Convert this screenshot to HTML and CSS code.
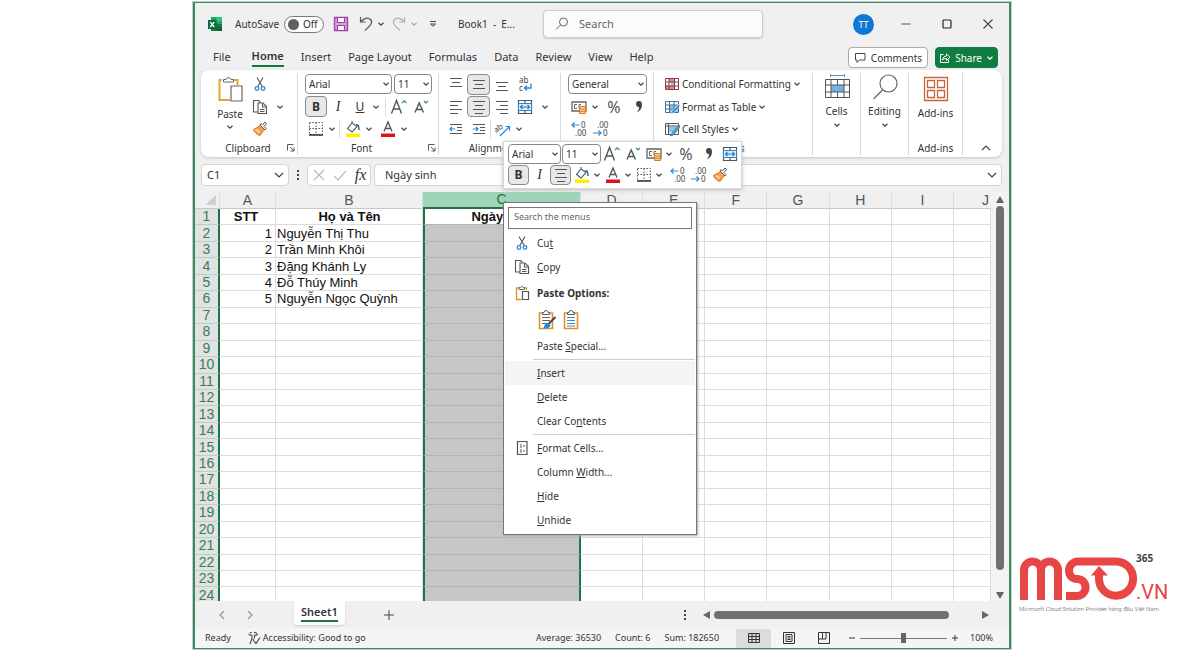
FILE: index.html
```html
<!DOCTYPE html>
<html lang="vi">
<head>
<meta charset="utf-8">
<title>Book1 - Excel</title>
<link rel="stylesheet" href="styles.css">
</head>
<body>
<svg class="sprite" aria-hidden="true">
  <symbol id="chev" viewBox="0 0 8 8"><path d="M1.5 2.8 4 5.2l2.5-2.4" fill="none" stroke="#444" stroke-width="1.2"/></symbol>
  <symbol id="cut" viewBox="0 0 14 16"><g fill="none" stroke="#555" stroke-width="1.1"><path d="M4 1.5 9.500 11M10 1.5 4.500 11"/><g stroke="#2b88d8" stroke-width="1.300"><circle cx="4" cy="12.500" r="1.800"/><circle cx="10" cy="12.500" r="1.800"/></g></g></symbol>
  <symbol id="copy" viewBox="0 0 16 16"><g fill="#fff" stroke="#555" stroke-width="1.1"><path d="M6 13H1.500V1.500h5L8.500 3.500"/><path d="M6 4h5l3.500 3.500v7H6z"/><path d="M10.500 4.500v3.500h4M8 10.500h4.500M8 12.500h4.500" fill="none"/></g></symbol>
  <symbol id="paste" viewBox="0 0 28 30"><path d="M6 5H3.500v20H14M18 5h3.500v5" fill="none" stroke="#eba133" stroke-width="2"/><path d="M7.500 7V4.500h2.500a2.600 2.600 0 0 1 5 0h2.500V7z" fill="#fff" stroke="#666"/><path d="M15 11h11v15H15z" fill="#fff" stroke="#666" stroke-width="1.200"/></symbol>
  <symbol id="pastesm" viewBox="0 0 16 16"><path d="M4.500 3H2.500v11.500h5M10.500 3h2v2" fill="none" stroke="#e0922a" stroke-width="1.300"/><path d="M5 4.500v-2h1.500a1.300 1.300 0 0 1 2.500 0h1.500v2z" fill="#fff" stroke="#666"/><path d="M8.500 6.500h6v8h-6z" fill="#fff" stroke="#555" stroke-width="1.200"/></symbol>
  <symbol id="painter" viewBox="0 0 16 16"><path d="M8.500 4.500 1.500 8.500c1 3 3 4.800 6.500 6l4.500-6z" fill="#f6a14a" stroke="#d9741a"/><path d="m3.500 9 3 .5M6 12l1.500-2" stroke="#fff" fill="none"/><path d="m8 4 5 5 1-1.500-2-2 2.500-3-1.500-1.500L10.500 4 9 2.500z" fill="#fff" stroke="#555"/></symbol>
  <symbol id="grow" viewBox="0 0 18 18"><path d="m1.500 15.500 5-13 5 13M3.400 11h6.200" fill="none" stroke="#555" stroke-width="1.400"/><path d="m12 5 2.200-2.200L16.500 5" fill="none" stroke="#2b88a8" stroke-width="1.200"/></symbol>
  <symbol id="shrink" viewBox="0 0 18 18"><path d="M3 14.500 7.200 5l4.300 9.500M4.500 11.500h5.500" fill="none" stroke="#555" stroke-width="1.400"/><path d="m12 3 2 2 2-2" fill="none" stroke="#2b88a8" stroke-width="1.200"/></symbol>
  <symbol id="borders" viewBox="0 0 16 16"><path d="M1.500 1.500h13v12h-13zM8 1.500v12M1.500 7.500h13" fill="none" stroke="#555" stroke-dasharray="1.500 1.500"/><path d="M1 14h14" stroke="#333" stroke-width="1.500"/></symbol>
  <symbol id="fill" viewBox="0 0 16 18"><path d="M7 3 2.500 8.500 7 12l5-5.500zM7 3V1" fill="#fff" stroke="#555" stroke-width="1.100"/><path d="M11 5c2-1 3 1 3 5" fill="none" stroke="#2b6ea8" stroke-width="1.500"/><path d="M1 13.500h14v3.500H1z" fill="#fbf000"/></symbol>
  <symbol id="fcolor" viewBox="0 0 16 18"><path d="M4 11.500 8 2l4 9.500M5.300 8.500h5.400" fill="none" stroke="#555" stroke-width="1.300"/><path d="M1 13.500h14v3.500H1z" fill="#e0101a"/></symbol>
  <symbol id="atop" viewBox="0 0 16 16"><path d="M2 2.500h12M4 6.500h8M2 10.500h12" stroke="#555" stroke-width="1.100"/></symbol>
  <symbol id="amid" viewBox="0 0 16 16"><path d="M2 4.500h12M4 8.500h8M2 12.500h12" stroke="#555" stroke-width="1.100"/></symbol>
  <symbol id="abot" viewBox="0 0 16 16"><path d="M2 6.500h12M4 10.500h8M2 14.500h12" stroke="#555" stroke-width="1.100"/></symbol>
  <symbol id="left" viewBox="0 0 16 16"><path d="M2 2.500h12M2 6.500h8M2 10.500h12M2 14.500h8" stroke="#555" stroke-width="1.100"/></symbol>
  <symbol id="center" viewBox="0 0 16 16"><path d="M2 2.500h12M4 6.500h8M2 10.500h12M4 14.500h8" stroke="#555" stroke-width="1.100"/></symbol>
  <symbol id="right" viewBox="0 0 16 16"><path d="M2 2.500h12M6 6.500h8M2 10.500h12M6 14.500h8" stroke="#555" stroke-width="1.100"/></symbol>
  <symbol id="outdent" viewBox="0 0 16 16"><path d="M2 3.500h12M9 6.500h5M9 9.500h5M2 12.500h12" stroke="#555" stroke-width="1.100"/><path d="M7 8H2M4 6 2 8l2 2" fill="none" stroke="#2b88d8" stroke-width="1.200"/></symbol>
  <symbol id="indent" viewBox="0 0 16 16"><path d="M2 3.500h12M9 6.500h5M9 9.500h5M2 12.500h12" stroke="#555" stroke-width="1.100"/><path d="M2 8h5M5 6l2 2-2 2" fill="none" stroke="#2b88d8" stroke-width="1.200"/></symbol>
  <symbol id="merge" viewBox="0 0 16 16"><path d="M1.500 1.500h13v13h-13zM8 1.500v13" fill="#fff" stroke="#555" stroke-width="1.200"/><path d="M1.500 4.500h13v7h-13z" fill="#d8edfb" stroke="#2b88c8"/><path d="M3.500 8h9M5.500 6l-2 2 2 2M10.500 6l2 2-2 2" fill="none" stroke="#2b78b8" stroke-width="1.100"/></symbol>
  <symbol id="money" viewBox="0 0 16 16"><path d="M1 3h14v9H1z" fill="#fff" stroke="#666" stroke-width="1.300"/><path d="M6 5.500H3.500v4H6M8 9.500v-4h2" fill="none" stroke="#666"/><path d="M8.500 7.500h6v7h-6zM8.500 10h6M8.500 12.300h6" fill="#fbd09c" stroke="#dc7c1e"/></symbol>
  <symbol id="comma" viewBox="0 0 10 14"><path d="M2 4a2.900 2.900 0 0 1 5.900 0C8.400 7.500 6.500 11 2.800 12.500 4.500 10.500 5 8.800 5 7 3.500 7.200 2 6 2 4z" fill="#444"/></symbol>
  <symbol id="cond" viewBox="0 0 16 16"><path d="M1.500 2.500h13v11h-13z" fill="#fff"/><path d="M5 2.500h5v4H5zM2 9.500h8v4H2z" fill="#f08080"/><path d="M7 6h4v4H7z" fill="#8fc4ef"/><path d="M1.500 2.500h13v11h-13zM5 2.500v11M10.500 2.500v11M1.500 6h13M1.500 10h13" fill="none" stroke="#7c4646"/></symbol>
  <symbol id="ftable" viewBox="0 0 16 16"><path d="M1.500 2.500h13v11h-13z" fill="#fff"/><path d="M5 6h9v7H5z" fill="#8fc4ef"/><path d="M1.500 2.500h13v11h-13zM5.500 2.500v11M10 2.500v11M1.500 6h13M1.500 10h13" fill="none" stroke="#47708c"/><path d="m15 5-7 7-2 3 3.500-1L16 7z" fill="#2b88d8" stroke="#fff" stroke-width=".6"/></symbol>
  <symbol id="cstyle" viewBox="0 0 16 16"><path d="M1.500 2.500h13v11h-13z" fill="#fff" stroke="#555"/><path d="M4.500 5.500h8v6h-8z" fill="#8fc4ef"/><path d="M1.500 5h13M4.500 2.500v11" stroke="#555"/><path d="m15 4-7 8-2 3 3.500-1L16 6z" fill="#58a6dc" stroke="#444" stroke-width=".6"/></symbol>
  <symbol id="cells" viewBox="0 0 28 28"><path d="M7.500 2.500h14M7.500 1v3M21.500 1v3" stroke="#4d9cc9"/><path d="M2.500 6.500h24v18h-24z" fill="#fff"/><path d="M8 12h13v7H8z" fill="#6db4ee"/><path d="M2.500 6.500h24v18h-24zM8 6.500v18M21 6.500v18M14.500 6.500v5.500M14.500 19v5.500M2.500 12h24M2.500 19h24" fill="none" stroke="#555"/></symbol>
  <symbol id="find" viewBox="0 0 28 28"><circle cx="17.500" cy="10.500" r="8.500" fill="#fff" stroke="#666" stroke-width="1.200"/><path d="m11.500 17-9 9" stroke="#666" stroke-width="1.200"/></symbol>
  <symbol id="addins" viewBox="0 0 28 28"><path d="M2.500 2.500h23v23h-23zM5.500 5.500h7v7h-7zM15.500 5.500h7v7h-7zM5.500 15.500h7v7h-7zM15.500 15.500h7v7h-7z" fill="none" stroke="#c4673a" stroke-width="1.300"/></symbol>
  <symbol id="launch" viewBox="0 0 8 8"><path d="M.5 6.500v-6h6M3 3l4 4M7 3.500V7H3.500" fill="none" stroke="#555"/></symbol>
  <symbol id="pasteword" viewBox="0 0 20 22"><path d="M5 4H2.500v15.500h13V4H13" fill="none" stroke="#e0922a" stroke-width="1.600"/><path d="M5.500 5.500V3.500H7a2 2 0 0 1 4 0h1.500v2z" fill="#fff" stroke="#555"/><path d="M5 8.500h8M5 11.500h8M5 14.500h5" stroke="#666"/><path d="m18.500 8-8 8" stroke="#444" stroke-width="2"/><path d="M11.500 14.500c-3-1-4 1-5 5 4 .5 7-1 7-3.500z" fill="#2b88d8"/></symbol>
  <symbol id="pastetext" viewBox="0 0 20 22"><path d="M5 4H2.500v15.500h13V4H13" fill="none" stroke="#e0922a" stroke-width="1.600"/><path d="M5.500 5.500V3.500H7a2 2 0 0 1 4 0h1.500v2z" fill="#fff" stroke="#555"/><path d="M5 8.500h8M5 11.500h8M5 14.500h8M5 17h8" stroke="#3a8dc8"/></symbol>
</svg>

<main class="page">
<section class="window">
  <header class="titlebar">
    <svg class="xl" viewBox="0 0 16 16"><path d="M4 1h11v14H4z" fill="#21a366"/><path d="M9.500 1H15v4.500H9.500z" fill="#33c481"/><path d="M4 8h11v7H4z" fill="#107c41"/><path d="M9.500 11H15v4H9.500z" fill="#185c37"/><path d="M1 4h8.500v9H1z" fill="#0e6b37"/><path d="m3.300 6 4 5M7.300 6l-4 5" stroke="#fff" stroke-width="1.300"/></svg>
    <label class="autosave">AutoSave <span class="toggle"><input type="checkbox"><span class="knob"></span>Off</span></label>
    <button class="tb" aria-label="Save"><svg viewBox="0 0 16 16"><path d="M1.500 1.500h13v13h-13z" fill="#d8a0df" stroke="#a144ad" stroke-width="1.400"/><path d="M4.500 1.500h7v5h-7zM4.500 9.500h7v5h-7z" fill="#fff" stroke="#a144ad" stroke-width="1.200"/></svg></button>
    <button class="tb undo" aria-label="Undo"><svg viewBox="0 0 16 16"><path d="M2.500 1v5h5M2.500 6C6 2 10 1 12.500 3.500s1 5-5.500 11" fill="none" stroke="#555" stroke-width="1.200"/></svg></button>
    <button class="chv" aria-label="Undo list"><svg><use href="#chev"/></svg></button>
    <button class="tb faded" aria-label="Redo"><svg viewBox="0 0 16 16"><path d="M13.500 1v5h-5M13.500 6C10 2 6 1 3.500 3.500s-1 5 5.500 11" fill="none" stroke="#555" stroke-width="1.200"/></svg></button>
    <button class="chv faded" aria-label="Redo list"><svg><use href="#chev"/></svg></button>
    <button class="chv qat" aria-label="Customize toolbar"><svg viewBox="0 0 8 8"><path d="M1 1.500h6M1.500 4 4 6.300 6.500 4z" fill="none" stroke="#444"/></svg></button>
    <span class="doc">Book1&nbsp; -&nbsp; E...</span>
    <label class="search"><svg viewBox="0 0 16 16"><circle cx="9.500" cy="6" r="4" fill="none" stroke="#666"/><path d="M6.500 9 2 13.500" stroke="#666"/></svg><input type="search" placeholder="Search" aria-label="Search"></label>
    <span class="avatar">TT</span>
    <div class="winbtns">
      <button aria-label="Minimize"><svg viewBox="0 0 12 12"><path d="M1.500 6h9" stroke="#555"/></svg></button>
      <button aria-label="Maximize"><svg viewBox="0 0 12 12"><rect x="2" y="2" width="8" height="8" rx="1" fill="none" stroke="#222" stroke-width="1.200"/></svg></button>
      <button aria-label="Close"><svg viewBox="0 0 12 12"><path d="m1.500 1.500 9 9M10.500 1.500l-9 9" stroke="#444" stroke-width="1.100"/></svg></button>
    </div>
  </header>

  <nav class="tabs">
    <button>File</button><button class="on">Home</button><button>Insert</button><button>Page Layout</button><button>Formulas</button><button>Data</button><button>Review</button><button>View</button><button>Help</button>
    <button class="comments"><svg viewBox="0 0 12 12"><path d="M1.500 1.500h9.500v6.500H5.500L3 10.500V8H1.500z" fill="none" stroke="#444"/></svg>Comments</button>
    <button class="share"><svg viewBox="0 0 12 12"><path d="M4.500 2.500h-3v8h8v-3M3.500 8c.5-3 2-4 4-4V2l3.500 3.200L7.500 8.400V6.500c-2 0-3 .3-4 1.500z" fill="none" stroke="#fff"/></svg>Share<svg class="mini-chev" viewBox="0 0 8 8"><path d="M1.500 2.800 4 5.200l2.500-2.400" fill="none" stroke="#fff" stroke-width="1.200"/></svg></button>
  </nav>

  <section class="ribbon">
    <div class="group clipboard">
      <div class="clip">
        <button class="big"><svg><use href="#paste"/></svg>Paste<svg class="mini-chev"><use href="#chev"/></svg></button>
        <div class="stack">
          <div class="row"><button class="t" aria-label="Cut"><svg><use href="#cut"/></svg></button></div>
          <div class="row"><button class="t" aria-label="Copy"><svg><use href="#copy"/></svg></button><button class="chv wide" aria-label="Copy options"><svg><use href="#chev"/></svg></button></div>
          <div class="row"><button class="t" aria-label="Format Painter"><svg><use href="#painter"/></svg></button></div>
        </div>
      </div>
      <div class="cap"><span>Clipboard</span><button aria-label="Clipboard settings"><svg><use href="#launch"/></svg></button></div>
    </div>
    <div class="group font">
      <div class="stack">
        <div class="row gap2"><span class="pick name"><select aria-label="Font"><option>Arial</option></select><svg><use href="#chev"/></svg></span><span class="pick size"><select aria-label="Font size"><option>11</option></select><svg><use href="#chev"/></svg></span></div>
        <div class="row"><button class="t on"><b>B</b></button><button class="t it">I</button><button class="t"><u>U</u></button><button class="chv" aria-label="Underline options"><svg><use href="#chev"/></svg></button><i class="bar loose"></i><button class="t" aria-label="Grow font"><svg class="lg"><use href="#grow"/></svg></button><button class="t" aria-label="Shrink font"><svg class="lg"><use href="#shrink"/></svg></button></div>
        <div class="row"><button class="t" aria-label="Borders"><svg><use href="#borders"/></svg></button><button class="chv" aria-label="Border options"><svg><use href="#chev"/></svg></button><i class="bar"></i><button class="t" aria-label="Fill color"><svg class="lg"><use href="#fill"/></svg></button><button class="chv" aria-label="Fill options"><svg><use href="#chev"/></svg></button><button class="t apart" aria-label="Font color"><svg class="lg"><use href="#fcolor"/></svg></button><button class="chv" aria-label="Font color options"><svg><use href="#chev"/></svg></button></div>
      </div>
      <div class="cap"><span>Font</span><button aria-label="Font settings"><svg><use href="#launch"/></svg></button></div>
    </div>
    <div class="group align">
      <div class="stack">
        <div class="row"><button class="t" aria-label="Top align"><svg><use href="#atop"/></svg></button><button class="t on" aria-label="Middle align"><svg><use href="#amid"/></svg></button><button class="t" aria-label="Bottom align"><svg><use href="#abot"/></svg></button><button class="t" aria-label="Wrap text"><svg class="lg" viewBox="0 0 18 18"><path d="M15 8.500v4.500H8.500M11 10.500 8.500 13l2.500 2.500" fill="none" stroke="#2b88d8" stroke-width="1.300"/><text x="3" y="8" class="tiny">ab</text><text x="3" y="16" class="tiny">c</text></svg></button></div>
        <div class="row"><button class="t" aria-label="Align left"><svg><use href="#left"/></svg></button><button class="t on" aria-label="Center"><svg><use href="#center"/></svg></button><button class="t" aria-label="Align right"><svg><use href="#right"/></svg></button><button class="t" aria-label="Merge"><svg><use href="#merge"/></svg></button><button class="chv wide" aria-label="Merge options"><svg><use href="#chev"/></svg></button></div>
        <div class="row"><button class="t" aria-label="Decrease indent"><svg><use href="#outdent"/></svg></button><button class="t" aria-label="Increase indent"><svg><use href="#indent"/></svg></button><i class="bar tight"></i><button class="t" aria-label="Orientation"><svg class="lg" viewBox="0 0 18 18"><path d="m6 16 9-9M11.500 6.500h4v4" fill="none" stroke="#2b88d8" stroke-width="1.200"/><text x="1" y="12" class="tiny" transform="rotate(-35 3 11)">ab</text></svg></button><button class="chv" aria-label="Orientation options"><svg><use href="#chev"/></svg></button></div>
      </div>
      <div class="cap"><span>Alignment</span></div>
    </div>
    <div class="group number">
      <div class="stack">
        <div class="row"><span class="pick format"><select aria-label="Number format"><option>General</option></select><svg><use href="#chev"/></svg></span></div>
        <div class="row"><button class="t" aria-label="Accounting"><svg><use href="#money"/></svg></button><button class="chv" aria-label="Accounting options"><svg><use href="#chev"/></svg></button><button class="t pct">%</button><button class="t" aria-label="Comma style"><svg class="comma"><use href="#comma"/></svg></button></div>
        <div class="row"><button class="t" aria-label="Increase decimal"><svg class="lg" viewBox="0 0 18 18"><path d="M9.500 5H2M4.500 2.500 2 5l2.500 2.500" fill="none" stroke="#2b88d8" stroke-width="1.200"/><text x="11" y="8" class="tiny">0</text><text x="5" y="16" class="tiny">.00</text></svg></button><button class="t" aria-label="Decrease decimal"><svg class="lg" viewBox="0 0 18 18"><path d="M1 13h8M6.500 10.500 9 13l-2.500 2.500" fill="none" stroke="#2b88d8" stroke-width="1.200"/><text x="5" y="8" class="tiny">.00</text><text x="11" y="16" class="tiny">0</text></svg></button></div>
      </div>
      <div class="cap"><span>Number</span></div>
    </div>
    <div class="group styles">
      <div class="stack">
        <button class="line"><svg><use href="#cond"/></svg>Conditional Formatting<svg class="mini-chev"><use href="#chev"/></svg></button>
        <button class="line"><svg><use href="#ftable"/></svg>Format as Table<svg class="mini-chev"><use href="#chev"/></svg></button>
        <button class="line"><svg><use href="#cstyle"/></svg>Cell Styles<svg class="mini-chev"><use href="#chev"/></svg></button>
      </div>
      <div class="cap"><span>Styles</span></div>
    </div>
    <div class="group narrow"><button class="big"><svg><use href="#cells"/></svg>Cells<svg class="mini-chev"><use href="#chev"/></svg></button></div>
    <div class="group narrow"><button class="big"><svg><use href="#find"/></svg>Editing<svg class="mini-chev"><use href="#chev"/></svg></button></div>
    <div class="group addins"><button class="big"><svg><use href="#addins"/></svg>Add-ins</button><div class="cap"><span>Add-ins</span></div></div>
    <button class="collapse" aria-label="Collapse ribbon"><svg viewBox="0 0 12 12"><path d="m2 8 4-4 4 4" fill="none" stroke="#444" stroke-width="1.200"/></svg></button>
  </section>

  <section class="formula">
    <label class="field namebox"><input value="C1" aria-label="Name box"><svg viewBox="0 0 12 12"><path d="m2 4 4 4 4-4" fill="none" stroke="#444" stroke-width="1.200"/></svg></label>
    <span class="dots"><i></i><i></i><i></i></span>
    <div class="field fx">
      <button aria-label="Cancel"><svg viewBox="0 0 14 14"><path d="m2 2 10 10M12 2 2 12" stroke="#bbb" stroke-width="1.200"/></svg></button>
      <button aria-label="Enter"><svg viewBox="0 0 14 14"><path d="m1 8 4 4 8-9" fill="none" stroke="#bbb" stroke-width="1.200"/></svg></button>
      <button class="fn">fx</button>
    </div>
    <label class="field entry"><input value="Ngày sinh" aria-label="Formula"><svg viewBox="0 0 12 12"><path d="m2 4 4 4 4-4" fill="none" stroke="#444" stroke-width="1.200"/></svg></label>
  </section>

  <section class="sheet">
    <table>
      <colgroup><col class="cn"><col class="ca"><col class="cb"><col class="cc"><col><col><col><col><col><col><col class="cj"></colgroup>
      <thead><tr><th class="corner"></th><th>A</th><th>B</th><th class="picked">C</th><th>D</th><th>E</th><th>F</th><th>G</th><th>H</th><th>I</th><th class="last">J</th></tr></thead>
      <tbody id="rows"></tbody>
    </table>
    <div class="vscroll"><i class="up"></i><i class="thumb"></i><i class="down"></i></div>
  </section>

  <section class="sheetbar">
    <button class="nav" aria-label="Previous sheet"><svg viewBox="0 0 12 12"><path d="M8 2 4 6l4 4" fill="none" stroke="#999" stroke-width="1.200"/></svg></button>
    <button class="nav" aria-label="Next sheet"><svg viewBox="0 0 12 12"><path d="m4 2 4 4-4 4" fill="none" stroke="#999" stroke-width="1.200"/></svg></button>
    <button class="sheettab"><span>Sheet1</span></button>
    <button class="plus" aria-label="New sheet"><svg viewBox="0 0 12 12"><path d="M6 1v10M1 6h10" stroke="#444"/></svg></button>
    <span class="dots"><i></i><i></i><i></i></span>
    <div class="hscroll"><i class="lt"></i><i class="thumb"></i><i class="rt"></i></div>
  </section>

  <footer class="status">
    <span>Ready</span>
    <svg class="acc" viewBox="0 0 14 14"><path d="M1.500 3.500 5 4.500v3L3 13M11 3.500 7.500 4.500v3M3 2.500c0-1 1-1.500 1.500-.5M7 2c1-1.500 3-.5 2 1M6 8l1 2 2 2.500 4-6" fill="none" stroke="#444" stroke-width="1.100"/></svg>
    <span>Accessibility: Good to go</span>
    <span class="avg">Average: 36530</span><span class="count">Count: 6</span><span class="sum">Sum: 182650</span>
    <div class="views">
      <button class="on" aria-label="Normal"><svg viewBox="0 0 12 12"><path d="M.5 1.500h11v9H.5zM4 1.500v9M8 1.500v9M.5 4.500h11M.5 7.500h11" fill="none" stroke="#333"/></svg></button>
      <button aria-label="Page layout"><svg viewBox="0 0 12 12"><path d="M.5.5h11v11H.5zM3 2.500h6v7H3zM4.500 4.500h3M4.500 6h3M4.500 7.500h3" fill="none" stroke="#333"/></svg></button>
      <button aria-label="Page break"><svg viewBox="0 0 12 12"><path d="M.5.5h11v11H.5zM4.500.5V7H.5M8 .5V7H4.500" fill="none" stroke="#333"/></svg></button>
    </div>
    <button class="zoombtn" aria-label="Zoom out"><svg viewBox="0 0 8 8"><path d="M1 4h6" stroke="#333"/></svg></button>
    <input class="zoom" type="range" value="50" aria-label="Zoom">
    <button class="zoombtn" aria-label="Zoom in"><svg viewBox="0 0 8 8"><path d="M1 4h6M4 1v6" stroke="#333"/></svg></button>
    <span class="pc">100%</span>
  </footer>

  <div class="minibar">
    <div class="row"><span class="pick mname"><select aria-label="Font"><option>Arial</option></select><svg><use href="#chev"/></svg></span><span class="pick msize"><select aria-label="Font size"><option>11</option></select><svg><use href="#chev"/></svg></span><button class="t" aria-label="Grow font"><svg class="lg"><use href="#grow"/></svg></button><button class="t" aria-label="Shrink font"><svg class="lg"><use href="#shrink"/></svg></button><button class="t" aria-label="Accounting"><svg><use href="#money"/></svg></button><button class="chv" aria-label="Accounting options"><svg><use href="#chev"/></svg></button><button class="t pct">%</button><button class="t" aria-label="Comma style"><svg class="comma"><use href="#comma"/></svg></button><button class="t" aria-label="Merge"><svg><use href="#merge"/></svg></button></div>
    <div class="row"><button class="t on"><b>B</b></button><button class="t it">I</button><button class="t on" aria-label="Center"><svg><use href="#center"/></svg></button><button class="t" aria-label="Fill color"><svg class="lg"><use href="#fill"/></svg></button><button class="chv" aria-label="Fill options"><svg><use href="#chev"/></svg></button><button class="t" aria-label="Font color"><svg class="lg"><use href="#fcolor"/></svg></button><button class="chv" aria-label="Font color options"><svg><use href="#chev"/></svg></button><button class="t" aria-label="Borders"><svg><use href="#borders"/></svg></button><button class="chv" aria-label="Border options"><svg><use href="#chev"/></svg></button><button class="t apart" aria-label="Increase decimal"><svg class="lg" viewBox="0 0 18 18"><path d="M9.500 5H2M4.500 2.500 2 5l2.500 2.500" fill="none" stroke="#2b88d8" stroke-width="1.200"/><text x="11" y="8" class="tiny">0</text><text x="5" y="16" class="tiny">.00</text></svg></button><button class="t" aria-label="Decrease decimal"><svg class="lg" viewBox="0 0 18 18"><path d="M1 13h8M6.500 10.500 9 13l-2.500 2.500" fill="none" stroke="#2b88d8" stroke-width="1.200"/><text x="5" y="8" class="tiny">.00</text><text x="11" y="16" class="tiny">0</text></svg></button><button class="t" aria-label="Format Painter"><svg><use href="#painter"/></svg></button></div>
  </div>

  <div class="menu">
    <input type="text" placeholder="Search the menus" aria-label="Search the menus">
    <button><svg><use href="#cut"/></svg><span>Cu<u>t</u></span></button>
    <button><svg><use href="#copy"/></svg><span><u>C</u>opy</span></button>
    <div class="head"><svg><use href="#pastesm"/></svg><b>Paste Options:</b></div>
    <div class="opts"><button aria-label="Keep source formatting"><svg><use href="#pasteword"/></svg></button><button aria-label="Keep text only"><svg><use href="#pastetext"/></svg></button></div>
    <button><span>Paste <u>S</u>pecial...</span></button>
    <hr>
    <button class="hover"><span><u>I</u>nsert</span></button>
    <button><span><u>D</u>elete</span></button>
    <button><span>Clear Co<u>n</u>tents</span></button>
    <hr>
    <button><svg viewBox="0 0 16 16"><path d="M3.500 1.500h9.500v13H3.500z" fill="#fff" stroke="#555" stroke-width="1.200"/><path d="M6 5h2M6 7h2M6 10h2M6 12h2M9 6h2M9 11h2" stroke="#555"/></svg><span><u>F</u>ormat Cells...</span></button>
    <button><span>Column <u>W</u>idth...</span></button>
    <button><span><u>H</u>ide</span></button>
    <button><span><u>U</u>nhide</span></button>
  </div>
</section>

<aside class="brand">
  <svg viewBox="0 0 160 64" role="img" aria-label="MSO.VN 365">
    <g fill="none" stroke="#e84545" stroke-width="8">
      <path d="M5 50V20a8.500 8.500 0 0 1 17 0V50M22 20a8.500 8.500 0 0 1 17 0V50"/>
      <path d="M47 46H58a8.500 8.500 0 0 0 8.500-8.500c0-5-3.500-8.500-8.500-8.500-5 0-8-3.500-8-8.500a9 9 0 0 1 9-9H97A17 17 0 0 1 97 45.700 17 17 0 0 1 80 28.700V23"/>
    </g>
    <path d="m80 16 9 9.500H72z" fill="#e84545"/>
    <text x="117" y="12" class="b365">365</text>
    <text x="117" y="49" class="bvn">.VN</text>
    <text x="0" y="61" class="btag">Microsoft Cloud Solution Provider hàng đầu Việt Nam</text>
  </svg>
</aside>
</main>
<script src="rows.js"></script>
</body>
</html>
```
FILE: rows.js
```js
const data = [
  ["STT", "Họ và Tên", "Ngày sinh"],
  ["1", "Nguyễn Thị Thu", ""],
  ["2", "Trần Minh Khôi", ""],
  ["3", "Đặng Khánh Ly", ""],
  ["4", "Đỗ Thúy Minh", ""],
  ["5", "Nguyễn Ngọc Quỳnh", ""]
];
const body = document.getElementById("rows");
for (let r = 0; r < 24; r++) {
  const tr = body.insertRow();
  const head = document.createElement("th");
  head.textContent = r + 1;
  tr.append(head);
  for (let c = 0; c < 10; c++) {
    const cell = tr.insertCell();
    cell.textContent = (data[r] || [])[c] || "";
    if (c === 0) cell.className = "num";
    if (c === 2) cell.className = "sel";
    if (r === 0) cell.classList.add("title");
  }
}
```
FILE: styles.css
```css
* { box-sizing: border-box; }
body { margin: 0; background: #fff; color: #333; font: 10px/16px "Noto Sans", "Open Sans", sans-serif; }
button, input, select { font: inherit; color: inherit; border: 0; padding: 0; margin: 0; background: none; }
button { display: flex; align-items: center; justify-content: center; white-space: nowrap; }
svg { display: block; flex: none; }
hr { border: 0; }
.sprite { position: absolute; width: 0; height: 0; }
.tiny { font: 8px "Noto Sans", sans-serif; fill: #444; }

.page { display: grid; grid-template-columns: 193px minmax(0, 1fr) 189px; min-height: 100vh; padding: 2px 0 1px; }
.window { grid-column: 2; position: relative; display: flex; flex-direction: column; background: #f0f0f0; border: 1px solid #3f8760; border-width: 1px 2px; outline: 1px solid #b9d3c5; }

.titlebar { display: flex; align-items: center; height: 42px; padding: 0 1px 0 12px; }
.xl { width: 16px; height: 16px; margin-right: 12px; }
.autosave { display: flex; align-items: center; gap: 5px; margin-right: 7px; }
.toggle { display: flex; align-items: center; gap: 4px; width: 40px; height: 17px; padding-left: 3px; border: 1px solid #777; border-radius: 9px; background: #fff; }
.toggle input { position: absolute; opacity: 0; }
.knob { width: 11px; height: 11px; border-radius: 50%; background: #606060; }
.tb { width: 20px; height: 20px; }
.tb svg { width: 16px; height: 16px; }
.undo { margin-left: 5px; }
.chv { width: 10px; height: 20px; }
.chv svg, .mini-chev { width: 8px; height: 8px; }
.titlebar .chv + .tb { margin-left: 3px; }
.faded { opacity: .4; }
.qat { margin-left: 9px; }
.doc { margin-left: 20px; width: 85px; }
.search { display: flex; align-items: center; flex: 0 1 220px; height: 28px; padding-left: 10px; gap: 9px; background: #fbfbfb; border: 1px solid #ccc; border-radius: 4px; box-shadow: 0 1px 2px #ccc; font-size: 11px; }
.search svg { width: 16px; height: 16px; }
.search input { width: 100%; min-width: 0; outline: 0; }
.search input::placeholder { color: #666; }
.avatar { margin-left: auto; width: 21px; height: 21px; border-radius: 50%; background: #0f78d4; color: #fff; font-size: 9px; line-height: 21px; text-align: center; }
.winbtns { display: flex; margin-left: 11px; }
.winbtns button { width: 41px; height: 24px; }
.winbtns svg { width: 12px; height: 12px; }

.tabs { display: flex; align-items: flex-start; gap: 17px; height: 25px; padding: 2px 11px 0 18px; font-size: 11px; }
.tabs button { height: 20px; }
.tabs .on { font-weight: 600; margin: 0 0 0 4px; border-bottom: 2px solid #107c41; }
.tabs .comments, .tabs .share { gap: 5px; height: 21px; padding: 0 5px; border-radius: 4px; background: #fff; border: 1px solid #aaa; font-size: 10px; }
.tabs .comments { margin-left: auto; }
.tabs .comments svg, .tabs .share svg:first-child { width: 12px; height: 12px; }
.tabs .share { margin-left: -10px; padding: 0 3px; gap: 4px; background: #107c41; border-color: #107c41; color: #fff; }

.ribbon { display: flex; height: 87px; margin: 0 7px 7px 6px; background: #fff; border-radius: 8px; box-shadow: 0 1px 3px #c4c4c4; }
.group { display: flex; flex-direction: column; justify-content: space-between; margin: 3px 0 2px; border-right: 1px solid #d8d8d8; flex: none; }
.stack { display: grid; grid-template-rows: 22px 23px 22px; }
.row { display: flex; align-items: center; }
.gap2 { gap: 2px; }
.t { width: 22px; height: 21px; font-size: 12px; }
.t svg { width: 16px; height: 16px; }
.t .lg { width: 18px; height: 18px; }
.t.on { background: #e8e8e8; border: 1px solid #8a8a8a; border-radius: 4px; }
.it { font-family: "Liberation Serif", serif; font-style: italic; font-size: 14px; }
.pct { font-size: 16px; color: #555; }
.t .comma { width: 10px; height: 14px; }
.bar { width: 1px; height: 18px; margin: 0 2px; background: #ddd; }
.bar.loose { margin: 0 2px 0 4px; }
.bar.tight { margin: 0; }
.apart { margin-left: 3px; }
.wide { width: 18px; }
.cap { display: flex; align-items: center; height: 15px; position: relative; justify-content: center; }
.cap button { position: absolute; right: 2px; top: 4px; }
.cap svg { width: 8px; height: 8px; }
.pick { display: grid; align-items: center; }
.pick > * { grid-area: 1 / 1; }
.pick select { appearance: none; width: 100%; height: 20px; padding-left: 3px; border: 1px solid #888; border-radius: 4px; background: #fff; }
.pick svg { width: 8px; height: 8px; justify-self: end; margin-right: 2px; pointer-events: none; }
.name { width: 87px; }
.size { width: 38px; }
.format { width: 79px; }
.big { flex-direction: column; justify-content: flex-start; line-height: 14px; }
.big svg { width: 28px; height: 28px; }
.big .mini-chev { width: 8px; height: 8px; }
.clip { display: flex; }
.clip .big { width: 38px; padding-top: 2px; gap: 2px; }
.clip .big svg:first-child { height: 30px; }
.clipboard { width: 97px; padding-left: 10px; }
.clipboard .cap { padding-right: 12px; }
.font { width: 141px; padding-left: 7px; }
.font .cap { padding-right: 20px; }
.align { width: 122px; padding-left: 5px; }
.align .t { width: 23px; }
.align .cap { padding-right: 18px; }
.number { width: 93px; padding-left: 7px; }
.number .pct { width: 28px; }
.styles { width: 159px; padding-left: 10px; }
.styles .cap { padding-right: 14px; }
.line { justify-content: flex-start; gap: 2px; }
.line svg:first-child { width: 16px; height: 16px; }
.narrow { width: 48px; }
.narrow .big svg:first-child, .addins .big svg:first-child { margin-bottom: 3px; }
.narrow .mini-chev { margin-top: 3px; }
.addins { width: 54px; }
.addins .big { padding-top: 2px; }
.collapse { margin: auto 10px 3px auto; }
.collapse svg { width: 12px; height: 12px; }

.formula { display: flex; height: 22px; margin: 0 7px 6px 6px; }
.field { display: flex; align-items: center; background: #fff; border: 1px solid #d4d4d4; border-radius: 4px; font-size: 11px; }
.field svg { width: 12px; height: 12px; margin-right: 3px; }
.field input { width: 100%; min-width: 0; outline: 0; }
.namebox { width: 88px; padding-left: 5px; }
.dots { display: grid; gap: 2px; align-content: center; margin: 0 8px; }
.dots i { width: 2px; height: 2px; background: #444; }
.fx { width: 64px; justify-content: space-around; margin-right: 3px; }
.fx button svg { width: 14px; height: 14px; margin: 0; }
.fn { font: italic 16px "Liberation Serif", serif; }
.entry { flex: 1; padding-left: 10px; }

.sheet { flex: 1; min-height: 0; display: grid; grid-template: minmax(0, 1fr) / minmax(0, 1fr) 18px; overflow: hidden; }
table { width: 100%; height: calc(100% + 3px); table-layout: fixed; border-collapse: separate; border-spacing: 0; font: 13px/15px "Liberation Sans", Arial, sans-serif; color: #111; }
.cn { width: 25px; } .ca { width: 56px; } .cb { width: 147px; } .cc { width: 158px; } .cj { width: 37px; }
th, td { padding: 0; overflow: hidden; white-space: nowrap; height: 16px; }
thead th { font-weight: 400; font-size: 14px; color: #555; border-right: 1px solid #ddd; border-bottom: 1px solid #c8c8c8; }
thead .picked { background: #9fd5b7; color: #2a6b48; border-bottom: 2px solid #217346; }
thead .last { text-align: right; padding-right: 2px; border-right: 0; }
.corner { background: linear-gradient(135deg, transparent 50%, #d0d0d0 50%) right 3px center / 10px 10px no-repeat; }
tbody th { background: #dfe3e1; color: #3d7c5a; font-weight: 400; font-size: 14px; border-right: 2px solid #217346; border-bottom: 1px solid #c4cac6; }
td { background: #fff; border-right: 1px solid #dcdcdc; border-bottom: 1px solid #dcdcdc; padding-left: 1px; }
.num { text-align: right; padding: 0 3px 0 0; }
.title { text-align: center; font-weight: 700; }
.sel { background: #c6c6c6; border-color: #b4b4b4; border-left: 2px solid #217346; border-right: 2px solid #217346; }
.sel.title { background: #fff; }
.vscroll { display: flex; flex-direction: column; align-items: center; gap: 3px; padding: 4px 0 2px; background: #f3f3f3; }
.vscroll .thumb { flex: 0 1 364px; width: 8px; border-radius: 4px; background: #707070; }
.up, .down { border: 4px solid transparent; }
.up { border-top: 0; border-bottom: 7px solid #666; }
.down { border-bottom: 0; border-top: 7px solid #666; margin-top: auto; }

.sheetbar { display: flex; align-items: center; height: 27px; padding-left: 13px; }
.nav { width: 28px; height: 20px; }
.nav svg { width: 12px; height: 12px; }
.sheettab { align-self: flex-start; height: 24px; margin: 0 38px 0 30px; padding: 0 7px; background: #fff; border-radius: 0 0 4px 4px; box-shadow: 0 1px 2px #ccc; font-size: 11px; font-weight: 600; }
.sheettab span { border-bottom: 2px solid #217346; }
.plus svg { width: 12px; height: 12px; }
.sheetbar .dots { margin: 0 17px 0 auto; }
.hscroll { display: flex; align-items: center; gap: 4px; flex: 0 1 306px; padding-right: 20px; }
.hscroll .thumb { flex: 0 1 235px; height: 8px; border-radius: 4px; background: #707070; }
.lt, .rt { border: 4px solid transparent; }
.lt { border-left: 0; border-right: 7px solid #666; }
.rt { border-right: 0; border-left: 7px solid #666; margin-left: auto; }

.status { display: flex; align-items: center; height: 20px; padding: 0 16px 0 10px; background: #f5f5f5; font-size: 9px; white-space: nowrap; }
.acc { width: 14px; height: 14px; margin: 0 2px 0 16px; }
.avg { margin-left: auto; }
.count, .sum { margin-left: 14px; }
.views { display: flex; margin: 0 7px 0 17px; }
.views button { width: 35px; height: 19px; }
.views .on { background: #dcdcdc; }
.views svg { width: 12px; height: 12px; }
.zoombtn svg { width: 8px; height: 8px; }
.zoom { appearance: none; width: 87px; height: 10px; margin: 0 4px; background: linear-gradient(#777, #777) center / 100% 1px no-repeat; }
.zoom::-webkit-slider-thumb { appearance: none; width: 5px; height: 10px; background: #666; }
.pc { margin-left: 11px; }

.minibar { position: absolute; left: 308px; top: 138px; display: grid; grid-template-rows: 21px 21px; padding: 1px 4px 3px; width: 239px; background: #fff; border: 1px solid #d6d6d6; box-shadow: 0 1px 4px #bbb; }
.mname { width: 53px; margin-right: 1px; }
.msize { width: 39px; }
.minibar .t { width: 21px; height: 20px; }
.minibar .t.pct { width: 24px; }

.menu { position: absolute; left: 308px; top: 199px; width: 194px; padding: 4px 1px 2px; background: #fff; border: 1px solid #777; box-shadow: 1px 1px 2px #aaa; }
.menu input { display: block; width: calc(100% - 6px); height: 22px; margin: 0 3px 2px; padding: 0 5px 3px; border: 1px solid #777; font-size: 9px; }
.menu input::placeholder { color: #666; }
.menu > button, .head { display: grid; grid-template-columns: 16px 1fr; gap: 7px; align-items: center; width: 100%; height: 24px; padding-left: 9px; text-align: left; }
.menu > button span { grid-column: 2; }
.menu svg { width: 16px; height: 16px; }
.menu .head { height: 27px; }
.menu .opts { display: flex; gap: 5px; height: 28px; padding-left: 32px; }
.menu .opts svg { width: 20px; height: 22px; }
.menu hr { height: 1px; margin: 1px 0 1px 28px; background: #ccc; }
.menu .hover { background: #f4f4f4; }

.brand { grid-column: 3; align-self: end; padding: 0 0 35px 8px; }
.brand svg { width: 160px; height: 64px; }
.b365 { font: 700 10px "Noto Sans", sans-serif; fill: #444; }
.bvn { font: 20px Roboto, sans-serif; fill: #e84545; }
.btag { font: 300 6px Roboto, sans-serif; fill: #555; }
```
